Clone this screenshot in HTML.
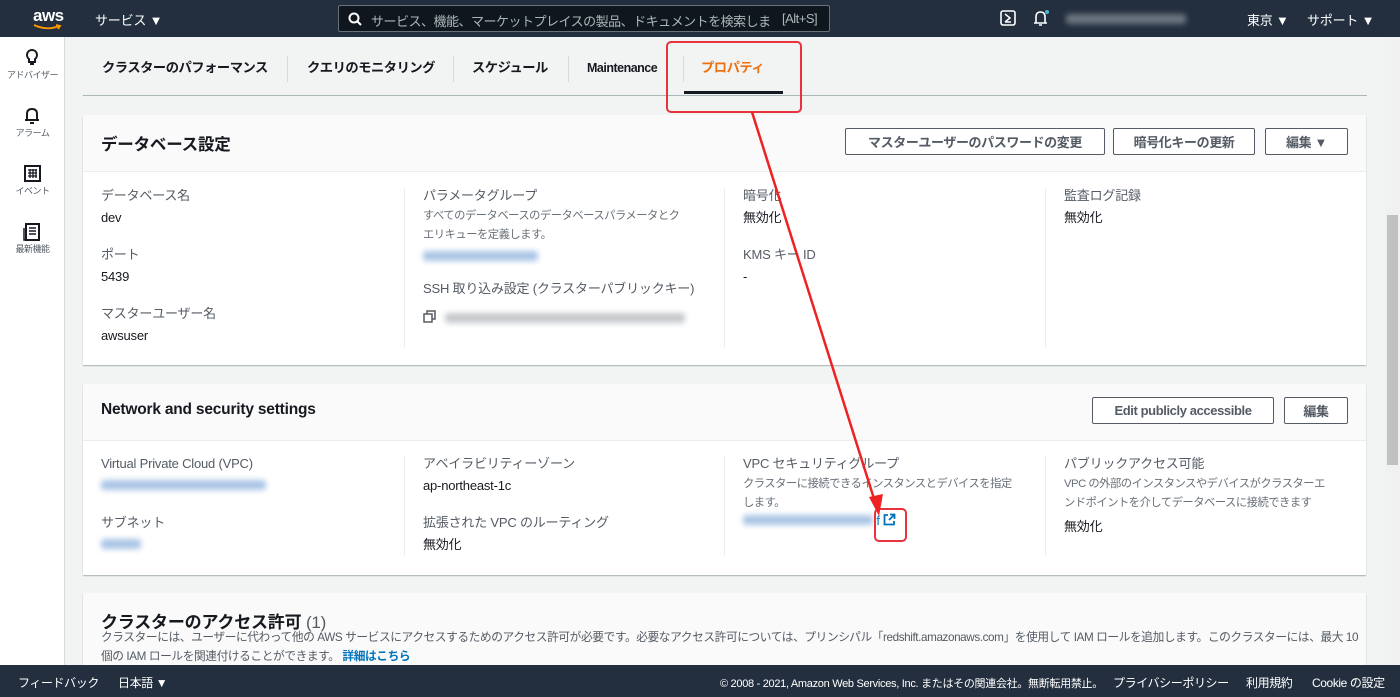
<!DOCTYPE html>
<html><head><meta charset="utf-8"><style>
*{box-sizing:border-box;margin:0;padding:0}
body{width:1400px;height:697px;overflow:hidden;background:#f2f3f3;font-family:"Liberation Sans","Noto Sans CJK JP",sans-serif;color:#16191f;font-size:13px;position:relative;letter-spacing:-0.2px}
.hdr{position:absolute;left:0;top:0;width:1400px;height:37px;background:#232f3e;color:#fff}
.hdr .t{position:absolute;top:10px;font-size:13px}
.search{position:absolute;left:338px;top:5px;width:492px;height:27px;border:1px solid #687078;border-radius:2px;background:#10161e;color:#aab7b8;font-size:13px;letter-spacing:-0.5px}
.side{position:absolute;left:0;top:37px;width:65px;height:628px;background:#fff;border-right:1px solid #d5dbdb}
.side div{position:absolute;width:65px;text-align:center;font-size:9px;color:#545b64;letter-spacing:-0.5px}
.tabs{position:absolute;left:83px;top:37px;width:1284px;height:59px;border-bottom:1px solid #aab7b8}
.tab{position:absolute;top:22px;font-weight:bold;font-size:13.3px;line-height:17px;color:#16191f;letter-spacing:-0.5px}
.sep{position:absolute;top:19px;width:1px;height:26px;background:#d5dbdb}
.card{position:absolute;left:83px;width:1283px;background:#fff;box-shadow:0 1px 1px rgba(0,28,36,.3)}
.ch{height:57px;background:#fafafa;border-bottom:1px solid #eaeded;position:relative}
.ch h2{position:absolute;left:18px;top:16px;font-size:16.5px;font-weight:bold}
.btn{position:absolute;top:13px;height:27px;border:1px solid #545b64;border-radius:2px;background:#fff;font-weight:bold;font-size:13px;color:#545b64;display:flex;align-items:center;justify-content:center;letter-spacing:-0.4px}
.col{position:absolute;font-size:13px}
.lbl{color:#545b64}
.div{position:absolute;width:1px;background:#eaeded}
.desc{font-size:11.3px;color:#687078;line-height:19px;letter-spacing:-0.5px}
.blur{display:inline-block;background:#aac4e6;filter:blur(3px);height:10px;border-radius:3px}
.blurg{display:inline-block;background:#c5c8cc;filter:blur(3px);height:10px;border-radius:3px}
.foot{position:absolute;left:0;top:665px;width:1400px;height:32px;background:#232f3e;color:#fff;font-size:12px}
.foot span{position:absolute;top:9px;letter-spacing:-0.4px}
.sb{position:absolute;left:1385px;top:37px;width:15px;height:628px;background:#f1f1f1}
</style></head><body>
<div class="hdr">
 <div style="position:absolute;left:33px;top:6px;font-size:17px;font-weight:bold;letter-spacing:-0.5px">aws</div>
 <svg style="position:absolute;left:33px;top:24px" width="30" height="7"><path d="M1 1 Q14 7 26 2 M23 1 L27 2 L25 5" stroke="#f90" stroke-width="1.8" fill="none"/></svg>
 <span class="t" style="left:95px">サービス ▼</span>
 <div class="search">
  <span style="position:absolute;left:32px;top:5px;width:408px;overflow:hidden;white-space:nowrap">サービス、機能、マーケットプレイスの製品、ドキュメントを検索しま</span>
  <span style="position:absolute;left:443px;top:5px;white-space:nowrap">[Alt+S]</span>
  <svg style="position:absolute;left:9px;top:6px" width="14" height="14"><circle cx="6" cy="6" r="4.5" stroke="#fff" stroke-width="2" fill="none"/><path d="M9.5 9.5 L13 13" stroke="#fff" stroke-width="2"/></svg></div>
 <svg style="position:absolute;left:1000px;top:10px" width="16" height="16"><rect x="1" y="1" width="14" height="14" rx="2" stroke="#fff" stroke-width="1.6" fill="none"/><path d="M5 4 L10 8 L5 12 M5 12 H11" stroke="#fff" stroke-width="1.5" fill="none"/></svg>
 <svg style="position:absolute;left:1032px;top:9px" width="18" height="18"><path d="M4 14 V8 Q4 3 8.5 3 Q13 3 13 8 V14 Z M2 14 H15 M7 16 H10" stroke="#fff" stroke-width="1.6" fill="none"/><circle cx="15" cy="3" r="2" fill="#44b9d6"/></svg>
 <span class="blurg" style="position:absolute;left:1066px;top:14px;width:120px;background:#6c7680"></span>
 <span class="t" style="left:1247px">東京 ▼</span>
 <span class="t" style="left:1307px">サポート ▼</span>
</div>
<div class="side">
 <svg style="position:absolute;left:24px;top:10px" width="16" height="20"><path d="M8 3 A5 5 0 0 1 11 12 V15 H5 V12 A5 5 0 0 1 8 3Z M6 17 H10" stroke="#16191f" stroke-width="2" fill="none"/></svg>
 <div style="top:31px">アドバイザー</div>
 <svg style="position:absolute;left:23px;top:70px" width="18" height="18"><path d="M4 13 V7 Q4 2 9 2 Q14 2 14 7 V13 Z M2 13 H16 M7 16 H11" stroke="#16191f" stroke-width="2" fill="none"/></svg>
 <div style="top:89px">アラーム</div>
 <svg style="position:absolute;left:24px;top:128px" width="17" height="17"><rect x="1" y="1" width="15" height="15" stroke="#16191f" stroke-width="2" fill="none"/><path d="M4 5 H13 M4 8 H13 M4 11 H13 M6 4 V13 M9 4 V13 M12 4 V13" stroke="#16191f" stroke-width="1.3"/></svg>
 <div style="top:147px">イベント</div>
 <svg style="position:absolute;left:23px;top:186px" width="18" height="18"><rect x="3" y="1" width="13" height="16" stroke="#16191f" stroke-width="2" fill="none"/><path d="M1 5 V17 H4 M6 5 H13 M6 8 H13 M6 11 H13" stroke="#16191f" stroke-width="1.5" fill="none"/></svg>
 <div style="top:205px">最新機能</div>
</div>
<div class="tabs">
 <span class="tab" style="left:19px">クラスターのパフォーマンス</span><div class="sep" style="left:204px"></div>
 <span class="tab" style="left:224px">クエリのモニタリング</span><div class="sep" style="left:370px"></div>
 <span class="tab" style="left:389px">スケジュール</span><div class="sep" style="left:485px"></div>
 <span class="tab" style="left:504px;font-size:12.5px;top:23px">Maintenance</span><div class="sep" style="left:600px"></div>
 <span class="tab" style="left:618px;color:#ec7211">プロパティ</span>
 <div style="position:absolute;left:601px;top:54px;width:99px;height:3px;background:#16191f"></div>
</div>
<div class="card" style="top:115px;height:250px">
 <div class="ch"><h2>データベース設定</h2>
  <div class="btn" style="left:762px;width:260px">マスターユーザーのパスワードの変更</div>
  <div class="btn" style="left:1030px;width:142px">暗号化キーの更新</div>
  <div class="btn" style="left:1182px;width:83px">編集 ▼</div></div>
 <div class="div" style="left:321px;top:74px;height:158px"></div>
 <div class="div" style="left:641px;top:74px;height:158px"></div>
 <div class="div" style="left:962px;top:74px;height:158px"></div>
 <div class="col" style="left:18px;top:70px;line-height:22px"><div class="lbl">データベース名</div><div>dev</div><div class="lbl" style="margin-top:15px">ポート</div><div>5439</div><div class="lbl" style="margin-top:15px">マスターユーザー名</div><div>awsuser</div></div>
 <div class="col" style="left:340px;top:70px;width:290px"><div class="lbl" style="line-height:22px">パラメータグループ</div><div class="desc" style="width:262px">すべてのデータベースのデータベースパラメータとクエリキューを定義します。</div><span class="blur" style="width:115px;margin-top:6px"></span><div class="lbl" style="margin-top:14px;line-height:22px;white-space:nowrap">SSH 取り込み設定 (クラスターパブリックキー)</div>
  <div style="margin-top:10px;position:relative"><svg width="14" height="14"><rect x="1" y="4" width="8" height="8" stroke="#545b64" stroke-width="1.5" fill="none"/><path d="M4 4 V1 H12 V9 H9" stroke="#545b64" stroke-width="1.5" fill="none"/></svg><span class="blurg" style="position:absolute;left:22px;top:3px;width:240px"></span></div></div>
 <div class="col" style="left:660px;top:70px;line-height:22px"><div class="lbl">暗号化</div><div>無効化</div><div class="lbl" style="margin-top:15px">KMS キー ID</div><div>-</div></div>
 <div class="col" style="left:981px;top:70px;line-height:22px"><div class="lbl">監査ログ記録</div><div>無効化</div></div>
</div>
<div class="card" style="top:384px;height:191px">
 <div class="ch"><h2 style="font-size:15.5px;top:17px">Network and security settings</h2>
  <div class="btn" style="left:1009px;width:182px">Edit publicly accessible</div>
  <div class="btn" style="left:1201px;width:64px">編集</div></div>
 <div class="div" style="left:321px;top:72px;height:100px"></div>
 <div class="div" style="left:641px;top:72px;height:100px"></div>
 <div class="div" style="left:962px;top:72px;height:100px"></div>
 <div class="col" style="left:18px;top:69px;line-height:22px"><div class="lbl">Virtual Private Cloud (VPC)</div><span class="blur" style="width:165px"></span><div class="lbl" style="margin-top:15px">サブネット</div><span class="blur" style="width:40px"></span></div>
 <div class="col" style="left:340px;top:69px;line-height:22px"><div class="lbl">アベイラビリティーゾーン</div><div>ap-northeast-1c</div><div class="lbl" style="margin-top:15px">拡張された VPC のルーティング</div><div>無効化</div></div>
 <div class="col" style="left:660px;top:69px;width:290px"><div class="lbl" style="line-height:22px">VPC セキュリティグループ</div><div class="desc" style="width:278px">クラスターに接続できるインスタンスとデバイスを指定します。</div><span class="blur" style="width:130px"></span><span style="color:#0073bb"> f</span>
  <svg width="13" height="13" style="vertical-align:-1px"><path d="M5 2 H1.5 V11.5 H11 V8 M7 1.5 H11.5 V6 M11.5 1.5 L6 7" stroke="#0073bb" stroke-width="1.8" fill="none"/></svg></div>
 <div class="col" style="left:981px;top:69px;width:290px"><div class="lbl" style="line-height:22px">パブリックアクセス可能</div><div class="desc" style="width:265px">VPC の外部のインスタンスやデバイスがクラスターエンドポイントを介してデータベースに接続できます</div><div style="margin-top:3px">無効化</div></div>
</div>
<div class="card" style="top:593px;height:80px;background:#fafafa">
 <div style="position:absolute;left:18px;top:15px;font-size:17px;font-weight:bold">クラスターのアクセス許可 <span style="font-weight:normal;color:#545b64">(1)</span></div>
 <div class="desc" style="position:absolute;left:18px;top:35px;width:1260px;line-height:19px;color:#545b64;font-size:11.7px;letter-spacing:-0.4px">クラスターには、ユーザーに代わって他の AWS サービスにアクセスするためのアクセス許可が必要です。必要なアクセス許可については、プリンシパル「redshift.amazonaws.com」を使用して IAM ロールを追加します。このクラスターには、最大 10<br>個の IAM ロールを関連付けることができます。 <b style="color:#0073bb">詳細はこちら</b></div>
</div>
<div class="sb"><div style="position:absolute;left:2px;top:178px;width:11px;height:250px;background:#c1c1c1"></div></div>
<div class="foot"><span style="left:18px">フィードバック</span><span style="left:118px">日本語 ▼</span><span style="left:720px;font-size:11px;top:10px;letter-spacing:-0.3px">© 2008 - 2021, Amazon Web Services, Inc. またはその関連会社。無断転用禁止。</span><span style="left:1113px">プライバシーポリシー</span><span style="left:1246px">利用規約</span><span style="left:1312px">Cookie の設定</span></div>
<svg style="position:absolute;left:0;top:0" width="1400" height="697">
 <rect x="667" y="42" width="134" height="70" rx="4" stroke="#e8323c" stroke-width="2" fill="none"/>
 <rect x="875" y="509" width="31" height="32" rx="4" stroke="#e8323c" stroke-width="2" fill="none"/>
 <path d="M752 112 L876 505" stroke="#ee2222" stroke-width="2.5"/>
 <path d="M869 497 L879 516 L883 494 Z" fill="#ee2222"/>
</svg>
</body></html>
